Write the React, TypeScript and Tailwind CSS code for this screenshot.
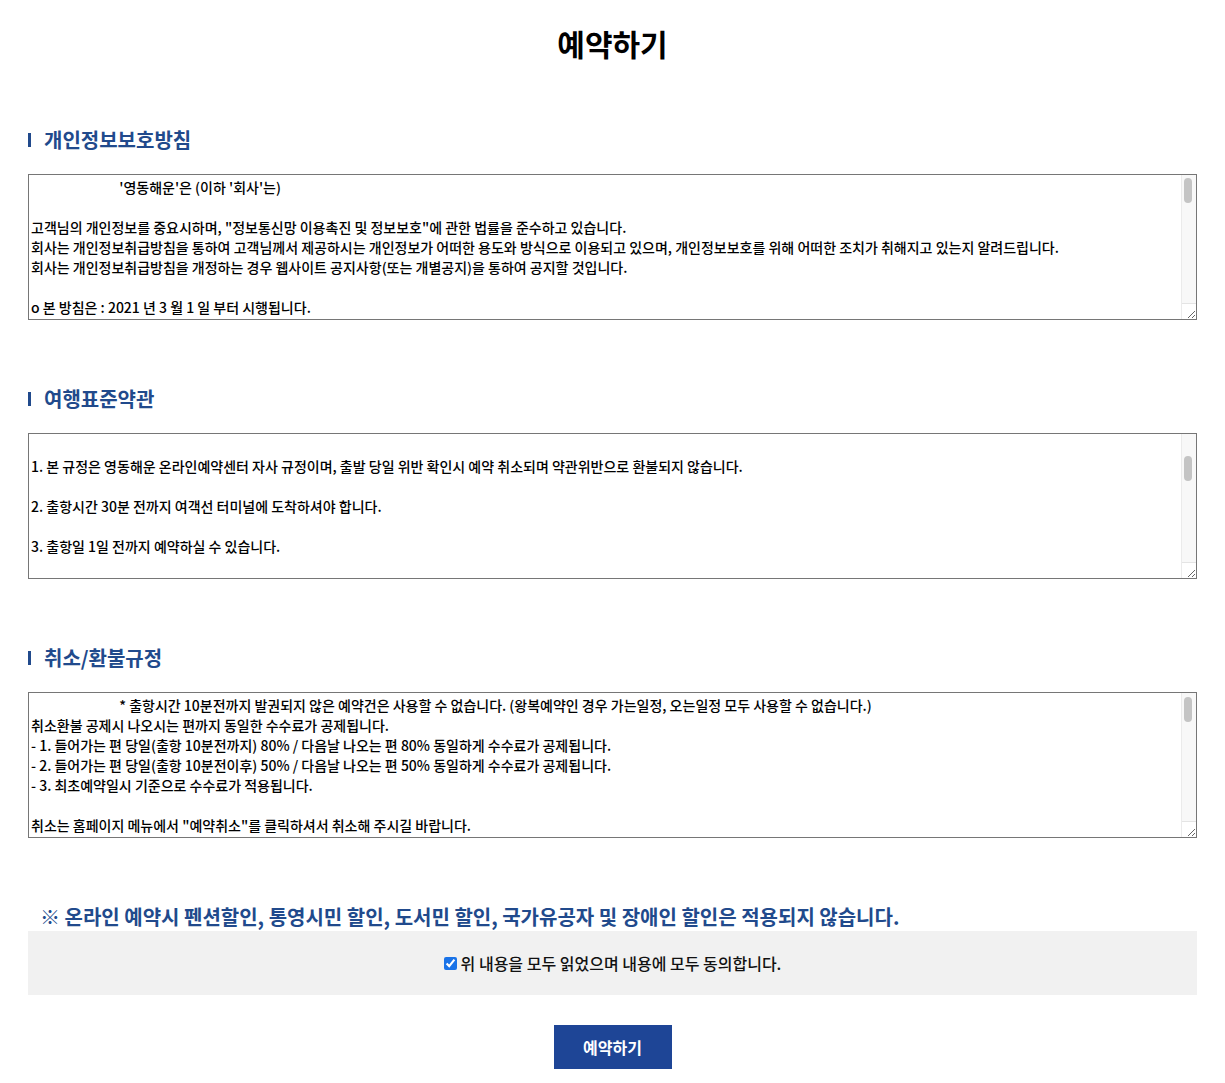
const SP = ' '.repeat(28);

const privacyText = [
  `${SP}'영동해운'은 (이하 '회사'는)`,
  '',
  '고객님의 개인정보를 중요시하며, "정보통신망 이용촉진 및 정보보호"에 관한 법률을 준수하고 있습니다.',
  '회사는 개인정보취급방침을 통하여 고객님께서 제공하시는 개인정보가 어떠한 용도와 방식으로 이용되고 있으며, 개인정보보호를 위해 어떠한 조치가 취해지고 있는지 알려드립니다.',
  '회사는 개인정보취급방침을 개정하는 경우 웹사이트 공지사항(또는 개별공지)을 통하여 공지할 것입니다.',
  '',
  'o 본 방침은 : 2021 년 3 월 1 일 부터 시행됩니다.',
  '',
  '■ 수집하는 개인정보 항목',
  '',
  '회사는 예약, 상담, 서비스 신청 등을 위해 아래와 같은 개인정보를 수집하고 있습니다.',
  '',
  'o 수집항목 : 이름, 생년월일, 성별, 휴대전화번호, 이메일, 결제기록',
  'o 개인정보 수집방법 : 홈페이지(온라인예약)',
  '',
  '■ 개인정보의 수집 및 이용목적',
  '',
  '회사는 수집한 개인정보를 다음의 목적을 위해 활용합니다.',
  '',
  'o 서비스 제공에 관한 계약 이행 및 서비스 제공에 따른 요금정산',
  '승선권 발권, 구매 및 요금 결제, 환불 처리',
  'o 회원 관리',
  '본인확인, 불량회원의 부정 이용 방지와 비인가 사용 방지, 민원처리, 고지사항 전달',
  '',
  '■ 개인정보의 보유 및 이용기간',
  '',
  '원칙적으로, 개인정보 수집 및 이용목적이 달성된 후에는 해당 정보를 지체 없이 파기합니다.',
  '',
  'o 계약 또는 청약철회 등에 관한 기록 : 5년',
  'o 대금결제 및 재화 등의 공급에 관한 기록 : 5년',
  'o 소비자의 불만 또는 분쟁처리에 관한 기록 : 3년',
  '',
  '■ 개인정보의 파기절차 및 방법',
  '',
  '회사는 원칙적으로 개인정보 수집 및 이용목적이 달성된 후에는 해당 정보를 지체없이 파기합니다.',
].join('\n');

const termsText = [
  '',
  '1. 본 규정은 영동해운 온라인예약센터 자사 규정이며, 출발 당일 위반 확인시 예약 취소되며 약관위반으로 환불되지 않습니다.',
  '',
  '2. 출항시간 30분 전까지 여객선 터미널에 도착하셔야 합니다.',
  '',
  '3. 출항일 1일 전까지 예약하실 수 있습니다.',
  '',
  '4. 승선 시 신분증을 반드시 지참하셔야 하며, 미지참 시 승선이 불가할 수 있습니다.',
  '',
  '5. 기상악화 등으로 인한 결항 시 예약은 자동 취소되며 전액 환불됩니다.',
  '',
  '6. 차량 선적 예약은 현장 상황에 따라 변경될 수 있습니다.',
  '',
  '7. 기타 사항은 여객선 운송약관에 따릅니다.',
  '',
].join('\n');

const refundText = [
  `${SP}* 출항시간 10분전까지 발권되지 않은 예약건은 사용할 수 없습니다. (왕복예약인 경우 가는일정, 오는일정 모두 사용할 수 없습니다.)`,
  '취소환불 공제시 나오시는 편까지 동일한 수수료가 공제됩니다.',
  '- 1. 들어가는 편 당일(출항 10분전까지) 80% / 다음날 나오는 편 80% 동일하게 수수료가 공제됩니다.',
  '- 2. 들어가는 편 당일(출항 10분전이후) 50% / 다음날 나오는 편 50% 동일하게 수수료가 공제됩니다.',
  '- 3. 최초예약일시 기준으로 수수료가 적용됩니다.',
  '',
  '취소는 홈페이지 메뉴에서 "예약취소"를 클릭하셔서 취소해 주시길 바랍니다.',
  '',
  '■ 취소 수수료 기준',
  '',
  '- 출항 2일 전까지 : 수수료 없음',
  '- 출항 1일 전 : 운임의 10% 공제',
  '- 출항 당일 출항시간 전까지 : 운임의 20% 공제',
  '- 출항시간 이후 : 환불 불가',
  '',
  '※ 기상악화로 인한 결항 시 수수료 없이 전액 환불됩니다.',
  '※ 카드결제 취소는 카드사 사정에 따라 3~7일 정도 소요될 수 있습니다.',
  '',
  '■ 환불 문의',
  '',
  '영동해운 온라인예약센터 고객센터로 문의하여 주시기 바랍니다.',
  '',
].join('\n');

function SectionTitle({ children }: { children: string }) {
  return (
    <h2 className="flex h-[28px] items-center gap-[13px] text-[20px] font-semibold leading-[28px] text-[#214a8c]">
      <span className="block h-[14px] w-[3px] bg-[#214a8c]" />
      {children}
    </h2>
  );
}

// the screenshot browser hides native scrollbars, so the bar is drawn over the box
function Box({ value, thumbTop }: { value: string; thumbTop: number }) {
  return (
    <div className="relative mt-[20px]">
      <textarea
        readOnly
        defaultValue={value}
        className="block h-[146px] w-full resize-y whitespace-pre-wrap border border-[#767676] py-[2px] pl-[2px] pr-[18px] text-[14px] font-medium leading-[20px] text-black outline-none"
        style={{ fontFamily: '"Noto Sans CJK KR", "Noto Sans", sans-serif' }}
      />
      <div className="pointer-events-none absolute bottom-px right-px top-px flex w-[15px] flex-col border-l border-[#ebebeb]">
        <div className="relative flex-1 bg-[#f8f8f8]">
          <div
            className="absolute left-[2px] h-[25px] w-[8px] rounded-full bg-[#c4c4c4]"
            style={{ top: thumbTop }}
          />
        </div>
        <div className="h-[16px] border-t border-[#e4e4e4]" />
      </div>
    </div>
  );
}

export default function App() {
  return (
    <div
      className="min-h-[1083px] bg-white px-[28px] pb-[14px] pt-[22px] text-[#111]"
      style={{ fontFamily: '"Noto Sans CJK KR", "Noto Sans", sans-serif' }}
    >
      <h1 className="text-center text-[30px] font-bold leading-[42px] text-black">예약하기</h1>

      <section className="mt-[62px]">
        <SectionTitle>개인정보보호방침</SectionTitle>
        <Box value={privacyText} thumbTop={3} />
      </section>

      <section className="mt-[65px]">
        <SectionTitle>여행표준약관</SectionTitle>
        <Box value={termsText} thumbTop={22} />
      </section>

      <section className="mt-[65px]">
        <SectionTitle>취소/환불규정</SectionTitle>
        <Box value={refundText} thumbTop={4} />
      </section>

      <p className="mt-[66px] pl-[12px] text-[20px] font-semibold leading-[26px] text-[#214a8c]">
        ※ 온라인 예약시 펜션할인, 통영시민 할인, 도서민 할인, 국가유공자 및 장애인 할인은 적용되지 않습니다.
      </p>

      <div className="mt-px flex h-[64px] items-center justify-center bg-[#f1f1f1]">
        <label className="flex items-center gap-[4px] text-[16px] font-medium leading-[20px] text-[#111]">
          <input type="checkbox" defaultChecked className="h-[13px] w-[13px] accent-[#1a73e8]" />
          위 내용을 모두 읽었으며 내용에 모두 동의합니다.
        </label>
      </div>

      <div className="mt-[30px] flex justify-center">
        <button
          type="button"
          className="h-[44px] w-[118px] bg-[#1e4596] text-[16px] font-bold text-white"
        >
          예약하기
        </button>
      </div>
    </div>
  );
}
